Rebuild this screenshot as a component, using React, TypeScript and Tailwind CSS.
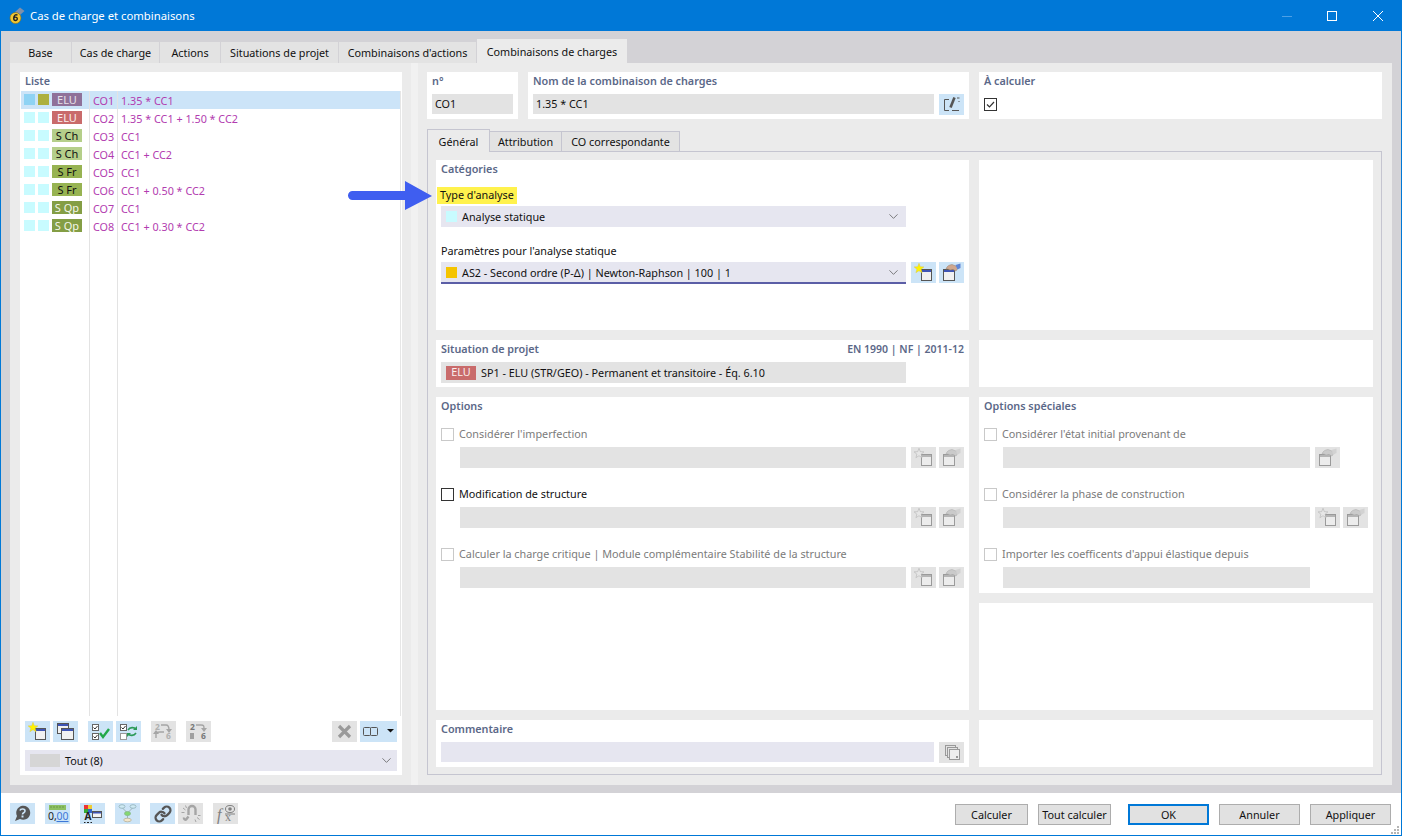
import React from "react";
import { ChevronDown, Link as LinkIcon } from "lucide-react";

const F = { fontFamily: '"Noto Sans", sans-serif' };

function Win({ x, y, w, h, gray }: { x: number; y: number; w: number; h: number; gray?: boolean }) {
  return (
    <g>
      <rect x={x + 0.5} y={y + 0.5} width={w} height={h} fill={gray ? "#ececec" : "#f1f1f1"} stroke={gray ? "#9a9a9a" : "#555"} />
      <rect x={x + 1} y={y + 1} width={w - 1} height={2} fill={gray ? "#b5b5b5" : "#3f55b5"} />
    </g>
  );
}
function Star({ cx, cy, gray }: { cx: number; cy: number; gray?: boolean }) {
  const pts: string[] = [];
  for (let i = 0; i < 10; i++) {
    const r = i % 2 === 0 ? 5.2 : 2.2;
    const a = (-90 + i * 36) * (Math.PI / 180);
    pts.push(`${(cx + r * Math.cos(a)).toFixed(1)},${(cy + r * Math.sin(a)).toFixed(1)}`);
  }
  return <polygon points={pts.join(" ")} fill={gray ? "#e6e6e6" : "#fff200"} stroke={gray ? "#ababab" : "#d8c84a"} strokeWidth="0.5" />;
}
const S = ({ children }: { children: React.ReactNode }) => (
  <svg width="25" height="21" viewBox="0 0 25 21">{children}</svg>
);
const NewI = ({ gray }: { gray?: boolean }) => (
  <S>
    <Win x={10} y={7} w={10} h={11} gray={gray} />
    <Star cx={8} cy={6.500} gray={gray} />
  </S>
);
const HandI = ({ gray }: { gray?: boolean }) => (
  <S>
    <Win x={4} y={7} w={11} h={11} gray={gray} />
    <path d="M7 7c1-3 3-4 6-4.500l4 1.500 2 2-2 3-3-1.500-3 .5-2-1z" fill={gray ? "#cacaca" : "#cfa78e"} stroke={gray ? "#a8a8a8" : "#97806f"} strokeWidth="0.5" />
    <path d="M16.500 3l5-1.500V6l-3 1.500z" fill={gray ? "#d2d2d2" : "#5f86d6"} />
  </S>
);
const CopyI = () => (
  <S>
    <Win x={4} y={2} w={11} h={10} />
    <Win x={8} y={7} w={12} h={11} />
  </S>
);
const Cb = ({ x, y, on }: { x: number; y: number; on?: boolean }) => (
  <g>
    <rect x={x + 0.5} y={y + 0.5} width="6" height="6" fill="#fff" stroke="#666" />
    {on && <path d={`M${x + 1.5} ${y + 3.5}l1.5 1.500 2.500-3`} fill="none" stroke="#333" />}
  </g>
);
const CheckAllI = () => (
  <S>
    <Cb x={4} y={3} on />
    <Cb x={4} y={12} on />
    <path d="M12 12l3 4 6-8" fill="none" stroke="#22a84a" strokeWidth="2.400" />
  </S>
);
const CheckSwapI = () => (
  <S>
    <Cb x={4} y={3} on />
    <rect x="4.500" y="12.500" width="6" height="6" fill="#fff" stroke="#999" />
    <path d="M12 9c2-3 6-3 8-1M20 12c-2 3-6 3-8 1" fill="none" stroke="#2c9a58" strokeWidth="1.600" />
    <path d="M21 5v4h-4zM11 16v-4h4z" fill="#2c9a58" />
  </S>
);
const Renum1 = () => (
  <S>
    <text x="4" y="9" fontSize="8.500" fontWeight="700" fill="#b0b0b0" style={F}>2</text>
    <text x="15" y="18" fontSize="8.500" fontWeight="700" fill="#b0b0b0" style={F}>6</text>
    <path d="M10 4h5c3 0 3 3 3 5M5 17v-4c0-2 2-2 4-2h4" fill="none" stroke="#a5a5a5" strokeWidth="1.400" />
    <path d="M15 8h6l-3 4zM2 13h6l-3-4z" fill="#a5a5a5" />
  </S>
);
const Renum2 = () => (
  <S>
    <text x="4" y="9" fontSize="8.500" fontWeight="700" fill="#777" style={F}>2</text>
    <text x="15" y="18" fontSize="8.500" fontWeight="700" fill="#777" style={F}>6</text>
    <path d="M10 4h5c3 0 3 1 3 4" fill="none" stroke="#a5a5a5" strokeWidth="1.400" />
    <path d="M15 7h6l-3 4z" fill="#a5a5a5" />
    <rect x="4" y="12" width="4" height="6" fill="#a0a0a0" />
  </S>
);
const DeleteI = () => (
  <S>
    <path d="M7 5l11 11M18 5L7 16" stroke="#9a9a9a" strokeWidth="3.200" />
  </S>
);
const ColsI = () => (
  <svg width="37" height="21" viewBox="0 0 37 21">
    <rect x="3.500" y="6.500" width="7" height="8" rx="1" fill="none" stroke="#555" />
    <rect x="10.500" y="6.500" width="7" height="8" rx="1" fill="none" stroke="#555" />
    <path d="M27 8h7l-3.500 3.500z" fill="#111" />
  </svg>
);
const HelpI = () => (
  <S>
    <path d="M5 18l2-5a7 7 0 1 1 3 3z" fill="#555" />
    <path d="M10 7.500c.5-2 5-2 5 .5 0 2-2.500 1.500-2.500 3.500" fill="none" stroke="#cce4f7" strokeWidth="1.600" />
    <rect x="11.500" y="12.500" width="2" height="2" fill="#cce4f7" />
  </S>
);
const UnitsI = () => (
  <S>
    <rect x="4" y="2" width="17" height="5" fill="#8cc063" />
    <path d="M6 5V3M9 5V3M12 5V3M15 5V3M18 5V3" stroke="#6a9a48" />
    <text x="3" y="17" fontSize="10.500" fill="#222" style={F}>0,</text>
    <text x="11.500" y="17" fontSize="10.500" fill="#3d78d8" textDecoration="underline" style={F}>00</text>
  </S>
);
const ColorI = () => (
  <S>
    <rect x="4" y="2" width="4" height="4" fill="#e33" />
    <rect x="8" y="2" width="4" height="4" fill="#ec3" />
    <rect x="4" y="6" width="4" height="4" fill="#3a3" />
    <rect x="8" y="6" width="4" height="4" fill="#36c" />
    <text x="4.500" y="17" fontSize="10" fontWeight="700" fill="#222" style={F}>A</text>
    <path d="M4 19.500h1.500M7 19.500h2M10.500 19.500h1.500" stroke="#222" />
    <rect x="12.500" y="8.500" width="9" height="6" fill="#f3f3f3" stroke="#555" />
    <rect x="13" y="9" width="8" height="1.500" fill="#3f55b5" />
  </S>
);
const TreeI = () => (
  <S>
    <path d="M7.500 5l5 5M17.500 5l-5 5M12.500 12v4" stroke="#9fb4b8" />
    <ellipse cx="7" cy="3.500" rx="3" ry="1.800" fill="#cfeaf4" stroke="#8fb0b8" strokeWidth="0.8" />
    <ellipse cx="18" cy="3.500" rx="3" ry="1.800" fill="#cfeaf4" stroke="#8fb0b8" strokeWidth="0.8" />
    <ellipse cx="12.500" cy="10.500" rx="3" ry="2" fill="#84d870" stroke="#86b88a" strokeWidth="0.8" />
    <ellipse cx="12.500" cy="17" rx="3.800" ry="1.800" fill="#f3e6ca" stroke="#b5b09a" strokeWidth="0.8" />
  </S>
);
const BrokenLinkI = () => (
  <S>
    <path d="M10.500 12V6.500a3.500 3.500 0 0 1 7 0V12" fill="none" stroke="#a5a5a5" strokeWidth="2.400" />
    <path d="M10.500 13.500l-2 2.500c-1 1.500-3 .5-2.500-1.500" fill="none" stroke="#a5a5a5" strokeWidth="2.400" />
    <path d="M5 5l2.500 2M3.500 9.500h3M7.500 2.500l1 2.500M19 14.500l2.500 2M20 12.500h2.500M17 16.500l1 2.500" stroke="#a5a5a5" />
  </S>
);
const FxI = () => (
  <S>
    <text x="4" y="17" fontSize="16" fontStyle="italic" fill="#808080" style={{ fontFamily: '"Liberation Serif", serif' }}>f</text>
    <text x="12" y="18" fontSize="12" fill="#808080" style={{ fontFamily: '"Liberation Serif", serif' }}>x</text>
    <ellipse cx="17" cy="6" rx="4.500" ry="3.500" fill="none" stroke="#808080" />
    <circle cx="17" cy="6" r="1.800" fill="#808080" />
    <path d="M12 11h10" stroke="#808080" />
  </S>
);
const CommentI = () => (
  <S>
    <rect x="6.500" y="3.500" width="10" height="10" fill="#e3e3e3" stroke="#999" />
    <rect x="8.500" y="5.500" width="10" height="10" fill="#e3e3e3" stroke="#999" />
    <rect x="10.500" y="7.500" width="10" height="10" fill="#efefef" stroke="#999" />
    <rect x="17" y="14" width="2" height="2" fill="#999" />
  </S>
);
const EditI = () => (
  <S>
    <path d="M10 5.500H5.500v11H10M13 16.500h7" fill="none" stroke="#555" />
    <path d="M15.500 3.500l-4 10" stroke="#555" strokeWidth="2.600" />
    <path d="M18 4h2.500M19.500 7.500h1" stroke="#555" />
  </S>
);

function Btn({ on, children, w }: { on?: boolean; children: React.ReactNode; w?: string }) {
  return (
    <div className={`flex h-[21px] shrink-0 items-center justify-center ${w ?? "w-[25px]"} ${on ? "bg-[#cce4f7]" : "bg-[#e3e3e3]"}`}>
      {children}
    </div>
  );
}

const Title = ({ children }: { children: React.ReactNode }) => (
  <div className="h-[18px] whitespace-nowrap px-[5px] text-[10.8px] font-semibold leading-[18px] text-[#5b6888]">{children}</div>
);

const rows = [
  ["ELU", "bg-[#8f7199] text-[#e6e0ea]", "CO1", "1.35 * CC1"],
  ["ELU", "bg-[#c96b6b] text-[#fbeeee]", "CO2", "1.35 * CC1 + 1.50 * CC2"],
  ["S Ch", "bg-[#b5cf8a] text-[#111]", "CO3", "CC1"],
  ["S Ch", "bg-[#b5cf8a] text-[#111]", "CO4", "CC1 + CC2"],
  ["S Fr", "bg-[#97b352] text-[#111]", "CO5", "CC1"],
  ["S Fr", "bg-[#97b352] text-[#111]", "CO6", "CC1 + 0.50 * CC2"],
  ["S Qp", "bg-[#849e45] text-[#f4f7ea]", "CO7", "CC1"],
  ["S Qp", "bg-[#849e45] text-[#f4f7ea]", "CO8", "CC1 + 0.30 * CC2"],
];

function ListRows() {
  return (
    <div className="ml-px mr-[1px] flex h-[625px] flex-col border-r border-[#e6e6e6]">
      {rows.map((r, i) => (
        <div key={r[2]} className={`flex h-[18px] shrink-0 ${i === 0 ? "bg-[#cce4f8]" : ""}`}>
          <div className="flex w-[69px] items-start border-r border-[#e3e3e3] pl-[3px] pt-[2px]">
            <div className={`mt-px h-[11px] w-[11px] ${i === 0 ? "bg-[#8fd3f4]" : "bg-[#c8fbff]"}`} />
            <div className={`ml-[3px] mt-px h-[11px] w-[11px] ${i === 0 ? "bg-[#adb03f]" : "bg-[#c8fbff]"}`} />
            <div className={`ml-[3px] flex h-[13px] w-[30px] items-center justify-center pt-px text-[11px] ${r[1]}`}>{r[0]}</div>
          </div>
          <div className="flex w-[28px] items-center border-r border-[#e3e3e3] pl-[3px] pt-[2px] text-[10.8px] text-[#b23cb0]">{r[2]}</div>
          <div className="flex flex-1 items-center pl-[3px] pt-[2px] text-[10.8px] text-[#b23cb0]">{r[3]}</div>
        </div>
      ))}
      <div className="flex flex-1">
        <div className="w-[69px] border-r border-[#e3e3e3]" />
        <div className="w-[28px] border-r border-[#e3e3e3]" />
      </div>
    </div>
  );
}

function CheckRow({ label, dark }: { label: string; dark?: boolean }) {
  return (
    <div className="flex h-[16px] items-center">
      <div className={`h-[13px] w-[13px] border bg-white ${dark ? "border-[#333]" : "border-[#c9c9c9]"}`} />
      <span className={`ml-[5px] whitespace-nowrap text-[10.8px] ${dark ? "text-[#111]" : "text-[#7b7b7b]"}`}>{label}</span>
    </div>
  );
}

function OptBlock({ label, dark, w, buttons }: { label: string; dark?: boolean; w: string; buttons: ("new" | "hand")[] }) {
  return (
    <div className="h-[60px]">
      <CheckRow label={label} dark={dark} />
      <div className="mt-[5px] flex pl-[19px]">
        <div className={`h-[21px] bg-[#e3e3e3] ${w}`} />
        <div className="ml-[5px] flex gap-[3px]">
          {buttons.map((b, i) => (
            <Btn key={i}>{b === "new" ? <NewI gray /> : <HandI gray />}</Btn>
          ))}
        </div>
      </div>
    </div>
  );
}

function FootBtn({ label, w, primary }: { label: string; w: string; primary?: boolean }) {
  return (
    <div className={`flex h-[21px] items-center justify-center whitespace-nowrap bg-[#e1e1e1] pt-px text-[10.8px] text-[#111] ${w} ${primary ? "border-2 border-[#0078d7]" : "border border-[#adadad]"}`}>
      {label}
    </div>
  );
}

const tabs: [string, string][] = [
  ["Base", "w-[61px]"],
  ["Cas de charge", "w-[87px]"],
  ["Actions", "w-[60px]"],
  ["Situations de projet", "w-[117px]"],
  ["Combinaisons d'actions", "w-[137px]"],
];

export default function App() {
  return (
    <div className="relative flex h-[836px] w-[1402px] flex-col overflow-hidden border border-[#0078d7] bg-white" style={F}>
      {/* title bar */}
      <div className="flex h-[30px] shrink-0 items-center bg-[#0078d7] pl-[8px] text-white">
        <svg width="16" height="18" viewBox="0 0 16 18">
          <path d="M6 5l5-4.500 4.500 3.500-4.500 4z" fill="#7f90aa" />
          <circle cx="6.500" cy="11" r="5.500" fill="#f2c832" stroke="#8a6d10" strokeWidth="0.6" />
          <path d="M8.500 8.200c-2-1-3.800 0-3.800 3 0 3 3.600 3 3.600.5 0-2-3-2-3.400-.6" fill="none" stroke="#222" strokeWidth="1.400" />
        </svg>
        <span className="ml-[5px] text-[11.3px]">Cas de charge et combinaisons</span>
        <div className="ml-auto flex items-center">
          <div className="mr-[35px] h-px w-[10px] bg-[#4da0e6]" />
          <div className="mr-[36px] h-[10px] w-[10px] border border-white" />
          <svg className="mr-[18px]" width="10" height="10" viewBox="0 0 10 10"><path d="M0 0l10 10M10 0L0 10" stroke="#fff" strokeWidth="1" /></svg>
        </div>
      </div>

      {/* body */}
      <div className="flex h-[762px] shrink-0 flex-col bg-[#d3d2d6] px-[9px] pb-[8px] pt-[8px]">
        <div className="flex h-[24px] shrink-0 items-end">
          {tabs.map(([t, w]) => (
            <div key={t} className={`mr-px flex h-[21px] items-center justify-center bg-[#e3e3e3] pt-[2px] text-[10.8px] text-[#111] ${w}`}>{t}</div>
          ))}
          <div className="flex h-[24px] w-[150px] items-center justify-center bg-[#ebebeb] pt-[3px] text-[10.8px] text-[#111]">Combinaisons de charges</div>
        </div>

        <div className="flex flex-1 bg-[#ebebeb]">
          {/* list side */}
          <div className="flex w-[401px] shrink-0 flex-col pb-[10px] pl-[10px] pr-[9px] pt-[9px]">
            <div className="flex flex-1 flex-col bg-white">
              <div className="h-[19px] px-[5px] text-[10.8px] font-semibold leading-[18px] text-[#5b6888]">Liste</div>
              <ListRows />
              <div className="mt-[5px] flex px-[5px]">
                <Btn on><NewI /></Btn>
                <div className="ml-[3px]"><Btn on><CopyI /></Btn></div>
                <div className="ml-[10px]"><Btn on><CheckAllI /></Btn></div>
                <div className="ml-[3px]"><Btn on><CheckSwapI /></Btn></div>
                <div className="ml-[10px]"><Btn><Renum1 /></Btn></div>
                <div className="ml-[10px]"><Btn><Renum2 /></Btn></div>
                <div className="ml-auto"><Btn><DeleteI /></Btn></div>
                <div className="ml-[3px]"><Btn on w="w-[37px]"><ColsI /></Btn></div>
              </div>
              <div className="mx-[5px] mt-[8px] flex h-[21px] items-center bg-[#e6e6f0] pl-[5px] pr-[3px] text-[10.8px] text-[#111]">
                <div className="h-[13px] w-[30px] bg-[#d6d6d6]" />
                <span className="ml-[5px] pt-[2px]">Tout (8)</span>
                <ChevronDown className="ml-auto text-[#555]" size={15} strokeWidth={1.2} />
              </div>
            </div>
          </div>

          <div className="w-[7px] shrink-0 bg-[#f1f1f1]" />

          {/* right side */}
          <div className="flex flex-1 flex-col pb-[10px] pl-[9px] pr-[10px] pt-[9px]">
            <div className="flex h-[47px] shrink-0 gap-[10px]">
              <div className="w-[91px] bg-white">
                <Title>n°</Title>
                <div className="ml-[5px] mt-[4px] flex h-[20px] w-[81px] items-center bg-[#e3e3e3] pl-[3px] text-[10.8px] text-[#111]">CO1</div>
              </div>
              <div className="flex w-[441px] flex-col bg-white">
                <Title>Nom de la combinaison de charges</Title>
                <div className="mt-[4px] flex pl-[5px]">
                  <div className="flex h-[20px] w-[401px] items-center bg-[#e3e3e3] pl-[3px] text-[10.8px] text-[#111]">1.35 * CC1</div>
                  <div className="ml-[5px]"><Btn on><EditI /></Btn></div>
                </div>
              </div>
              <div className="flex-1 bg-white">
                <Title>À calculer</Title>
                <div className="ml-[5px] mt-[8px] flex h-[13px] w-[13px] items-center justify-center border border-[#333] bg-white">
                  <svg width="11" height="11" viewBox="0 0 11 11"><path d="M2 5.500l2.500 2.500L9 3" fill="none" stroke="#333" strokeWidth="1.200" /></svg>
                </div>
              </div>
            </div>

            {/* sub tabs */}
            <div className="mt-[10px] flex h-[22px] shrink-0 items-end">
              <div className="z-10 -mb-px flex h-[23px] w-[63px] items-center justify-center border border-b-0 border-[#c5c5d0] bg-[#ebebeb] pt-[2px] text-[10.8px] text-[#111]">Général</div>
              <div className="flex h-[20px] w-[72px] items-center justify-center border border-b-0 border-l-0 border-[#c5c5d0] bg-[#e3e3e3] pt-[2px] text-[10.8px] text-[#111]">Attribution</div>
              <div className="flex h-[20px] w-[118px] items-center justify-center border border-b-0 border-l-0 border-[#c5c5d0] bg-[#e3e3e3] pt-[2px] text-[10.8px] text-[#111]">CO correspondante</div>
            </div>

            <div className="grid flex-1 grid-cols-[533px_394px] grid-rows-[170px_47px_1fr_47px] gap-[10px] border border-[#c5c5d0] px-[8px] pb-[7px] pt-[8px]">
              {/* Catégories */}
              <div className="bg-white">
                <Title>Catégories</Title>
                <div className="ml-px mt-[9px] flex h-[17px] w-[80px] items-center whitespace-nowrap bg-[#fff24d] pl-[3px] text-[10.8px] text-[#111]">Type d'analyse</div>
                <div className="ml-[5px] mt-[2px] flex h-[21px] w-[465px] items-center bg-[#e6e6f0] pl-[5px] pr-[5px] text-[10.8px] text-[#111]">
                  <div className="h-[11px] w-[11px] bg-[#c8fbff]" />
                  <span className="ml-[5px] pt-[2px]">Analyse statique</span>
                  <ChevronDown className="ml-auto text-[#555]" size={15} strokeWidth={1.2} />
                </div>
                <div className="ml-[5px] mt-[16px] flex h-[16px] items-center text-[10.8px] text-[#111]">Paramètres pour l'analyse statique</div>
                <div className="ml-[5px] mt-[3px] flex">
                  <div className="flex h-[22px] w-[465px] items-center border-b-2 border-[#5b5ea6] bg-[#e6e6f0] pl-[5px] pr-[5px] text-[10.8px] text-[#111]">
                    <div className="h-[11px] w-[11px] bg-[#f5c400]" />
                    <span className="ml-[5px] pt-[2px]">AS2 - Second ordre (P-Δ) | Newton-Raphson | 100 | 1</span>
                    <ChevronDown className="ml-auto text-[#555]" size={15} strokeWidth={1.2} />
                  </div>
                  <div className="ml-[5px] flex gap-[3px]">
                    <Btn on><NewI /></Btn>
                    <Btn on><HandI /></Btn>
                  </div>
                </div>
              </div>
              <div className="bg-white" />

              {/* Situation */}
              <div className="bg-white">
                <div className="flex justify-between pr-[5px]">
                  <Title>Situation de projet</Title>
                  <span className="text-[10.5px] font-semibold leading-[18px] text-[#5b6888]">EN 1990 | NF | 2011-12</span>
                </div>
                <div className="ml-[5px] mt-[4px] flex h-[21px] w-[465px] items-center bg-[#e3e3e3] pl-[5px] text-[10.8px] text-[#111]">
                  <div className="flex h-[14px] w-[30px] items-center justify-center bg-[#c96b6b] text-[#fbeeee]">ELU</div>
                  <span className="ml-[5px] pt-[2px]">SP1 - ELU (STR/GEO) - Permanent et transitoire - Éq. 6.10</span>
                </div>
              </div>
              <div className="bg-white" />

              {/* Options */}
              <div className="bg-white">
                <Title>Options</Title>
                <div className="mt-[11px] px-[5px]">
                  <OptBlock label="Considérer l'imperfection" w="w-[446px]" buttons={["new", "hand"]} />
                  <OptBlock label="Modification de structure" dark w="w-[446px]" buttons={["new", "hand"]} />
                  <OptBlock label="Calculer la charge critique | Module complémentaire Stabilité de la structure" w="w-[446px]" buttons={["new", "hand"]} />
                </div>
              </div>
              <div className="flex flex-col gap-[10px]">
                <div className="h-[196px] shrink-0 bg-white">
                  <Title>Options spéciales</Title>
                  <div className="mt-[11px] px-[5px]">
                    <OptBlock label="Considérer l'état initial provenant de" w="w-[307px]" buttons={["hand"]} />
                    <OptBlock label="Considérer la phase de construction" w="w-[307px]" buttons={["new", "hand"]} />
                    <OptBlock label="Importer les coefficents d'appui élastique depuis" w="w-[307px]" buttons={[]} />
                  </div>
                </div>
                <div className="flex-1 bg-white" />
              </div>

              {/* Commentaire */}
              <div className="bg-white">
                <Title>Commentaire</Title>
                <div className="mt-[4px] flex pl-[5px]">
                  <div className="h-[20px] w-[493px] bg-[#e6e6f0]" />
                  <div className="ml-[5px]"><Btn><CommentI /></Btn></div>
                </div>
              </div>
              <div className="bg-white" />
            </div>
          </div>
        </div>
      </div>

      {/* footer */}
      <div className="relative flex flex-1 items-start pl-[9px] pr-[10px] pt-[10px]">
        <Btn on><HelpI /></Btn>
        <div className="ml-[10px]"><Btn on><UnitsI /></Btn></div>
        <div className="ml-[10px]"><Btn on><ColorI /></Btn></div>
        <div className="ml-[10px]"><Btn on><TreeI /></Btn></div>
        <div className="ml-[10px]"><Btn on><LinkIcon size={18} strokeWidth={3} className="text-[#555]" /></Btn></div>
        <div className="ml-[3px]"><Btn><BrokenLinkI /></Btn></div>
        <div className="ml-[10px]"><Btn><FxI /></Btn></div>
        <div className="ml-auto mt-px flex">
          <FootBtn label="Calculer" w="w-[73px]" />
          <div className="ml-[10px]"><FootBtn label="Tout calculer" w="w-[73px]" /></div>
          <div className="ml-[17px]"><FootBtn label="OK" w="w-[81px]" primary /></div>
          <div className="ml-[10px]"><FootBtn label="Annuler" w="w-[81px]" /></div>
          <div className="ml-[10px]"><FootBtn label="Appliquer" w="w-[81px]" /></div>
        </div>
        <svg className="absolute bottom-[1px] right-[2px]" width="9" height="8" viewBox="0 0 9 8">
          <path d="M7 0h2v2H7zM4 3h2v2H4zM7 3h2v2H7zM1 6h2v2H1zM4 6h2v2H4zM7 6h2v2H7z" fill="#b5b5b5" />
        </svg>
      </div>

      {/* blue annotation arrow */}
      <svg className="absolute left-[346px] top-[178px]" width="86" height="32" viewBox="0 0 86 32">
        <path d="M5.500 12H58V2l27 15-27 14V21H5.500a4.500 4.500 0 0 1 0-9z" fill="#3f5ef0" />
      </svg>
    </div>
  );
}
